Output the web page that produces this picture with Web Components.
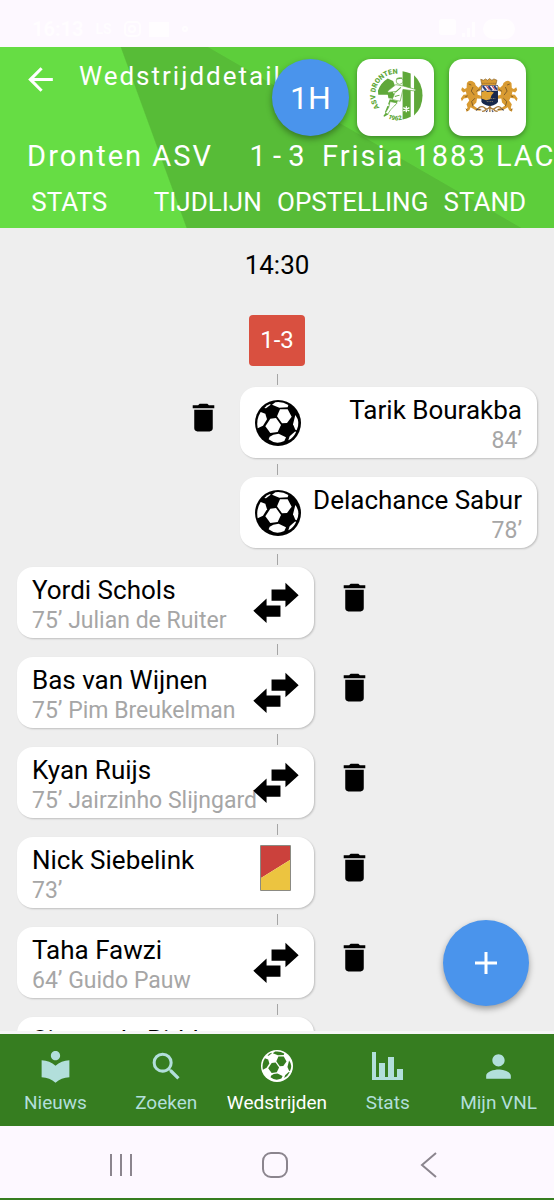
<!DOCTYPE html>
<html lang="nl">
<head>
<meta charset="utf-8">
<meta name="viewport" content="width=device-width, initial-scale=1">
<title>Wedstrijddetails</title>
<style>
  body {
    margin: 0;
    font-family: Roboto, "Liberation Sans", sans-serif;
    background: #fdf8ff;
  }
</style>
</head>
<body>
<match-app>
  <status-bar slot="top"></status-bar>
  <match-header slot="top" home="Dronten ASV" score="1 - 3" away="Frisia 1883 LAC">
    Wedstrijddetails
    <round-button slot="badges" size="small" label="Eerste helft">1H</round-button>
    <club-crest slot="badges" club="dronten"></club-crest>
    <club-crest slot="badges" club="frisia"></club-crest>
  </match-header>
  <time-line time="14:30" score="1-3">
    <match-event side="away" type="goal" name="Tarik Bourakba" detail="84’" removable></match-event>
    <match-event side="away" type="goal" name="Delachance Sabur" detail="78’"></match-event>
    <match-event side="home" type="swap" name="Yordi Schols" detail="75’ Julian de Ruiter" removable></match-event>
    <match-event side="home" type="swap" name="Bas van Wijnen" detail="75’ Pim Breukelman" removable></match-event>
    <match-event side="home" type="swap" name="Kyan Ruijs" detail="75’ Jairzinho Slijngard" removable></match-event>
    <match-event side="home" type="card" name="Nick Siebelink" detail="73’" removable></match-event>
    <match-event side="home" type="swap" name="Taha Fawzi" detail="64’ Guido Pauw" removable></match-event>
    <match-event side="home" type="swap" name="Simon de Ridder" detail="64’" removable></match-event>
  </time-line>
  <round-button slot="fab" size="large" label="Toevoegen">
    <svg width="24" height="24" viewBox="0 0 24 24" fill="none" stroke="#fff" stroke-width="3" aria-hidden="true"><path d="M12 1v22M1 12h22"/></svg>
  </round-button>
  <bottom-nav slot="bottom">
    <nav-item icon="book">Nieuws</nav-item>
    <nav-item icon="search">Zoeken</nav-item>
    <nav-item icon="ball" active>Wedstrijden</nav-item>
    <nav-item icon="chart">Stats</nav-item>
    <nav-item icon="person">Mijn VNL</nav-item>
  </bottom-nav>
  <system-nav slot="bottom"></system-nav>
</match-app>

<script>
// the disc uses currentColor, the panels use --panel
const ball = (size) => `
  <svg width="${size}" height="${size}" viewBox="46 39 138 138" aria-hidden="true">
    <circle cx="115" cy="108" r="69" fill="currentColor"/>
    <g fill="var(--panel)">
      <path d="M92 95l17-2 15 21-10 21-22 3-15-20z"/>
      <path d="M121 67h23l12 22-14 19-15 1-15-21z"/>
      <path d="M63 75l14 5 5 17-12 19-16 8q-5-27 9-49z"/>
      <path d="M97 53l10-7q21-3 39 8l-2 7-25 1z"/>
      <path d="M74 63q7-9 17-12l2 2-14 11z"/>
      <path d="M167 84q16 21 4 46l-4-2-7-16z"/>
      <path d="M101 143l16-3 22 11-5 11q-26 12-47-5l3-8z"/>
      <path d="M169 136q-8 17-23 24l4-12 17-15z"/>
    </g>
  </svg>`;

const icons = {
  goal: ball(46),
  swap: `<svg width="46" height="46" viewBox="757 85 139 139" aria-hidden="true">
    <path d="M813 114h42V93l40 38-40 36v-19h-42zM840 162v34h-42v19l-40-37 40-37v21z"/></svg>`,
  card: `<svg width="46" height="56" viewBox="0 0 46 56" aria-hidden="true">
    <path fill="#cb413c" d="M8 1h29v14L8 33z"/><path fill="#ecc440" d="M37 15v31H8V33z"/>
    <path fill="none" stroke="#8b8a82" d="M7.500.500h30v45h-30z"/></svg>`,
  trash: `<svg width="37" height="37" viewBox="0 0 24 24" aria-hidden="true">
    <path d="M6 19c0 1.100.900 2 2 2h8c1.100 0 2-.900 2-2V7H6v12zM19 4h-3.500l-1-1h-5l-1 1H5v2h14V4z"/></svg>`,
  book: `<svg width="37" height="37" viewBox="0 0 24 24" fill="currentColor" aria-hidden="true">
    <path d="M12 11.550C9.640 9.350 6.480 8 3 8v11c3.480 0 6.640 1.350 9 3.550 2.360-2.190 5.520-3.550 9-3.550V8c-3.480 0-6.640 1.350-9 3.550zM12 8c1.660 0 3-1.340 3-3s-1.340-3-3-3-3 1.340-3 3 1.340 3 3 3z"/></svg>`,
  search: `<svg width="37" height="37" viewBox="0 0 24 24" fill="currentColor" aria-hidden="true">
    <path d="M15.500 14h-.790l-.280-.270A6.470 6.470 0 0 0 16 9.500 6.500 6.500 0 1 0 9.500 16c1.610 0 3.090-.590 4.230-1.570l.270.280v.790l5 4.990L20.490 19l-4.990-5zm-6 0C7.010 14 5 11.990 5 9.500S7.010 5 9.500 5 14 7.010 14 9.500 11.990 14 9.500 14z"/></svg>`,
  ball: ball(32),
  chart: `<svg width="32" height="32" viewBox="0 0 32 32" fill="currentColor" aria-hidden="true">
    <path d="M0 2h4v25h3V13h6v14h3V7h6v20h3v-8h6v11H0z"/></svg>`,
  person: `<svg width="37" height="37" viewBox="0 0 24 24" fill="currentColor" aria-hidden="true">
    <path d="M12 12c2.210 0 4-1.790 4-4s-1.790-4-4-4-4 1.790-4 4 1.790 4 4 4zm0 2c-2.670 0-8 1.340-8 4v2h16v-2c0-2.660-5.330-4-8-4z"/></svg>`
};

const lion = `
  <path fill="#d99b32" d="M352 100q6-9 17-5 9 4 9 12l8 7 9-9 5 6-9 13-8 2 1 9 14 4v8l-16-1-2 12-9 9 12 8 9 1v6l-14-1-15-9-4 9-8 4-2-6 5-6-3-10 8-11-4-8-12 2-6 8-3-8 8-11 9-1-2-9-8 3-6-7 3-8 7 5 6-3z"/>
  <path fill="none" stroke="#5b4326" stroke-width="2" d="M357 103l8 3M370 112l-5 12 9 12M376 145l-10 10 4 14M347 141l7-3M380 125l10-7M349 176l5 6M383 177l12 3"/>`;

const crests = {
  dronten: `<svg viewBox="22 29 228 228" role="img" aria-label="ASV Dronten">
    <g fill="#5fa83a">
      <path d="M157 65q13 2 24 7v128q-12 6-24 8z"/>
      <path d="M191 77q25 23 25 60t-25 59z"/>
      <path d="M84 123q8-23 29-36l16 7 5 13-19 16v12H85z"/>
      <path d="M112 128l14-4 8 12-6 11-13-2z"/>
      <path d="M119 148l24 5-9 15-20-5zM112 168l10 2-9 18-8-2zM100 198l7-10 9 4-13 8z"/>
    </g>
    <g fill="#fff" stroke="#5fa83a" stroke-width="2">
      <circle cx="148" cy="94" r="10"/>
      <path d="M137 105l22 4 37 10-1 5-37-5-8 35-24-5 10-24-22 3-1-4z"/>
      <path d="M120 155l21 4-19 20-9 13-7-3 10-17z"/>
    </g>
    <path stroke="#5fa83a" stroke-width="3" d="M139 88l17-3M136 127l16-14M134 140l14-4"/>
    <path stroke="#fff" stroke-width="4" d="M168 169v18M159 173l18 10M159 183l18-10"/>
    <path id="arc" fill="none" d="M89 173A62 62 0 0 1 160 77"/>
    <path id="foot" fill="none" d="M113 204Q132 215 158 208"/>
    <g fill="#5fa83a" font-family="Roboto, sans-serif" font-weight="900">
      <text font-size="21"><textPath href="#arc">ASV DRONTEN</textPath></text>
      <text font-size="19"><textPath href="#foot">1962</textPath></text>
    </g></svg>`,
  frisia: `<svg viewBox="299 29 228 228" role="img" aria-label="Frisia 1883">
    <g>${lion}</g>
    <g transform="matrix(-1 0 0 1 836 0)">${lion}</g>
    <path fill="#d99b32" stroke="#8a6428" stroke-width="2" d="M393 89l8 3 6-4 6 4 6-5 7 5 6-4 9 4-4 16h-40z"/>
    <path stroke="#5b4326" stroke-width="2" stroke-dasharray="3 3" d="M398 101h39"/>
    <path fill="#17284c" d="M395 107h49v47q0 9-24 15-25-6-25-15z"/>
    <path fill="#f2eff5" d="M396 108h47v15h-47z"/>
    <path stroke="#243b79" stroke-width="6" d="M399 109l10 13M416 109l10 13M433 109l8 11"/>
    <path stroke="#c33a48" stroke-width="3" d="M410 109l9 12M427 109l9 12"/>
    <path fill="#e0a331" d="M395 127l12-4 6 4 10-2 9 3-7 8-4 12-12 3-14-5z"/>
    <path stroke="#b9a675" stroke-width="2" stroke-dasharray="3 2" d="M409 146h27M411 155h20"/>
    <path fill="none" stroke="#a87937" stroke-width="4" d="M386 174q12-8 19 0t15-4q7 12 16 4t18 0M397 184q10 0 12-8M443 184q-10 0-12-8M420 170v16"/>
    <path stroke="#30395a" stroke-width="3" d="M379 181l7-5M454 176l7 5M413 181l-4 5M426 181l4 5"/></svg>`
};

class BaseElement extends HTMLElement {
  constructor() {
    super();
    this.attachShadow({ mode: "open" });
  }

  connectedCallback() {
    const template = document.createElement("template");
    template.innerHTML = this.render();
    this.shadowRoot.replaceChildren(template.content.cloneNode(true));
  }

  attr(name) {
    return this.getAttribute(name) || "";
  }
}

class MatchApp extends BaseElement {
  render() {
    return `
      <style>
        :host { display: flex; flex-direction: column; height: 100vh; overflow: hidden; }
        main { position: relative; flex: 1; min-height: 0; overflow: hidden; background: #eee; }
        .fab { position: absolute; right: 25px; bottom: 25px; }
      </style>
      <slot name="top"></slot>
      <main>
        <slot></slot>
        <div class="fab"><slot name="fab"></slot></div>
      </main>
      <slot name="bottom"></slot>`;
  }
}

class StatusBar extends BaseElement {
  render() {
    return `
      <style>
        :host { display: flex; align-items: center; justify-content: space-between;
          box-sizing: border-box; height: 47px; padding: 10px 38px 0 32px; color: #fffdff;
          font-size: 20px; font-weight: 700; }
        div { display: flex; align-items: center; gap: 12px; }
        small { font-size: 14px; }
      </style>
      <div>
        <span>16:13</span><small>LS</small>
        <svg width="72" height="18" viewBox="0 0 72 18" fill="none" stroke="currentColor" stroke-width="2">
          <rect x="1" y="2" width="15" height="14" rx="4"/><circle cx="8" cy="9" r="3"/>
          <path fill="currentColor" d="M26 3h18v13H26z"/><circle cx="61" cy="9" r="2"/></svg>
      </div>
      <svg width="77" height="20" viewBox="0 0 77 20" fill="currentColor">
        <rect width="17" height="16" rx="3"/><path d="M23 18v-4h3v4zm5 0V9h3v9zm5 0V3h3v15z"/>
        <rect x="44" width="32" height="20" rx="10"/></svg>`;
  }
}

class MatchHeader extends BaseElement {
  render() {
    return `
      <style>
        :host { display: block; position: relative; color: #fff; overflow: hidden;
          background:
            linear-gradient(70deg, #66dd44 30%, transparent 30.2%),
            linear-gradient(30deg, #57bc37 60%, #5dce3b 60.2%); }
        .title { display: flex; gap: 20px; padding: 14px 0 0 22px; }
        button { padding: 0; border: 0; background: none; color: inherit; }
        svg { display: block; }
        h1 { margin: 0; font-size: 26px; font-weight: 400; line-height: 30px;
          letter-spacing: 2px; white-space: nowrap; }
        .badges { position: absolute; top: 12px; right: 28px; display: flex; gap: 8px; }
        ::slotted(club-crest:last-child) { margin-left: 7px; }
        .teams { display: grid; grid-template-columns: minmax(0, 1fr) 90px minmax(0, 1fr);
          margin-top: 42px; font-size: 29px; line-height: 32px; text-align: center; white-space: nowrap; }
        .team { letter-spacing: 2px; }
        .team:first-child { padding-left: 8px; }
        nav { display: flex; padding: 15px 0 11px; }
        a { flex: 1; min-width: 0; color: inherit; text-decoration: none; text-align: center;
          font-size: 26px; line-height: 30px; white-space: nowrap; }
      </style>
      <div class="title">
        <button aria-label="Terug"><svg width="37" height="37" viewBox="0 0 24 24" fill="#fff">
          <path d="M20 11H7.830l5.590-5.590L12 4l-8 8 8 8 1.410-1.410L7.830 13H20v-2z"/></svg></button>
        <h1><slot></slot></h1>
      </div>
      <div class="teams">
        <span class="team">${this.attr("home")}</span>
        <span>${this.attr("score")}</span>
        <span class="team">${this.attr("away")}</span>
      </div>
      <nav>
        <a href="#stats">STATS</a>
        <a href="#tijdlijn">TIJDLIJN</a>
        <a href="#opstelling">OPSTELLING</a>
        <a href="#stand">STAND</a>
      </nav>
      <div class="badges"><slot name="badges"></slot></div>`;
  }
}

class RoundButton extends BaseElement {
  render() {
    return `
      <style>
        :host { display: block; --size: 77px; }
        :host([size="large"]) { --size: 86px; }
        button { display: grid; place-items: center; width: var(--size); height: var(--size);
          padding: 0; border: 0; border-radius: 50%; background: #4a94ec; color: #fff;
          font: inherit; font-size: 32px; box-shadow: 0 3px 6px rgba(0, 0, 0, .35); }
        ::slotted(svg) { display: block; }
      </style>
      <button aria-label="${this.attr("label")}"><slot></slot></button>`;
  }
}

class ClubCrest extends BaseElement {
  render() {
    return `
      <style>
        :host { display: block; width: 77px; height: 77px; border-radius: 14px; background: #fff;
          box-shadow: 0 2px 5px rgba(0, 0, 0, .35); }
        svg { display: block; width: 100%; height: 100%; }
      </style>
      ${crests[this.attr("club")]}`;
  }
}

class TimeLine extends BaseElement {
  render() {
    return `
      <style>
        :host { display: flex; flex-direction: column; padding: 22px 17px 0; }
        time { font-size: 26px; line-height: 30px; text-align: center; }
        .score { align-self: center; margin: 35px 0 2px; width: 56px; border-radius: 4px;
          background: #d95040; color: #fff; font-size: 24px; line-height: 51px; text-align: center; }
      </style>
      <time>${this.attr("time")}</time>
      <div class="score">${this.attr("score")}</div>
      <slot></slot>`;
  }
}

class MatchEvent extends BaseElement {
  render() {
    const trash = this.hasAttribute("removable")
      ? `<button aria-label="Verwijder ${this.attr("name")}">${icons.trash}</button>`
      : "";
    return `
      <style>
        :host { display: block; --panel: #fff; }
        :host::before { content: ""; display: block; width: 1px; height: 11px;
          margin: 6px auto 2px; background: #a5a5a5; }
        .row { display: flex; align-items: flex-start; gap: 22px; }
        :host([side="away"]) .row { flex-direction: row-reverse; gap: 18px; }
        article { display: flex; align-items: center; box-sizing: border-box; flex: none;
          width: calc(50% + 37px); height: 71px; padding: 0 15px; border-radius: 16px;
          background: #fff; box-shadow: 1px 1px 2px rgba(0, 0, 0, .2); }
        :host([side="away"]) article { flex-direction: row-reverse; text-align: right; }
        .text { flex: 1; min-width: 0; padding-top: 7px; white-space: nowrap; }
        :host([side="away"]) .text { display: flex; flex-direction: column; align-items: flex-end; }
        h2 { margin: 0; font-size: 26px; font-weight: 400; line-height: 30px; color: #000; }
        p { margin: 0; font-size: 23px; line-height: 32px; color: #a6a6a6; }
        svg { display: block; flex: none; }
        button { margin: 12px 0 0; padding: 0; border: 0; background: none; }
      </style>
      <div class="row">
        <article>
          <div class="text"><h2>${this.attr("name")}</h2><p>${this.attr("detail")}</p></div>
          ${icons[this.attr("type")]}
        </article>
        ${trash}
      </div>`;
  }
}

class BottomNav extends BaseElement {
  render() {
    return `
      <style>
        :host { display: block; border-top: 3px solid #f6f6f6; background: #367d20; }
        nav { display: flex; }
      </style>
      <nav><slot></slot></nav>`;
  }
}

class NavItem extends BaseElement {
  render() {
    return `
      <style>
        :host { flex: 1; min-width: 0; color: #b2dfdb; --panel: #367d20; }
        :host([active]) { color: #fff; }
        a { display: flex; flex-direction: column; align-items: center; padding: 14px 0 11px;
          color: inherit; text-decoration: none; font-size: 19px; line-height: 25px; white-space: nowrap; }
        .icon { display: grid; place-items: center; height: 36px; margin-bottom: 6px; }
        svg { display: block; }
      </style>
      <a href="#"><span class="icon">${icons[this.attr("icon")]}</span><slot></slot></a>`;
  }
}

class SystemNav extends BaseElement {
  render() {
    return `
      <style>
        :host { display: grid; grid-template-columns: repeat(3, 28%); justify-content: center;
          padding: 26px 4px 20px 0; border-bottom: 2px solid #367d20; background: #fdf8ff; }
        button { display: grid; place-items: center; padding: 0; border: 0; background: none; }
        svg { display: block; }
        path, rect { fill: none; stroke: #8b858e; stroke-width: 2; }
      </style>
      <button aria-label="Recente apps"><svg width="26" height="26" viewBox="0 0 26 26"><path d="M3 2v22M13 2v22M23 2v22"/></svg></button>
      <button aria-label="Startscherm"><svg width="26" height="26" viewBox="0 0 26 26"><rect x="1" y="1" width="24" height="24" rx="8"/></svg></button>
      <button aria-label="Vorige"><svg width="26" height="26" viewBox="0 0 26 26"><path d="M20 1L6 13l14 12"/></svg></button>`;
  }
}

customElements.define("match-app", MatchApp);
customElements.define("status-bar", StatusBar);
customElements.define("match-header", MatchHeader);
customElements.define("round-button", RoundButton);
customElements.define("club-crest", ClubCrest);
customElements.define("time-line", TimeLine);
customElements.define("match-event", MatchEvent);
customElements.define("bottom-nav", BottomNav);
customElements.define("nav-item", NavItem);
customElements.define("system-nav", SystemNav);
</script>
</body>
</html>
